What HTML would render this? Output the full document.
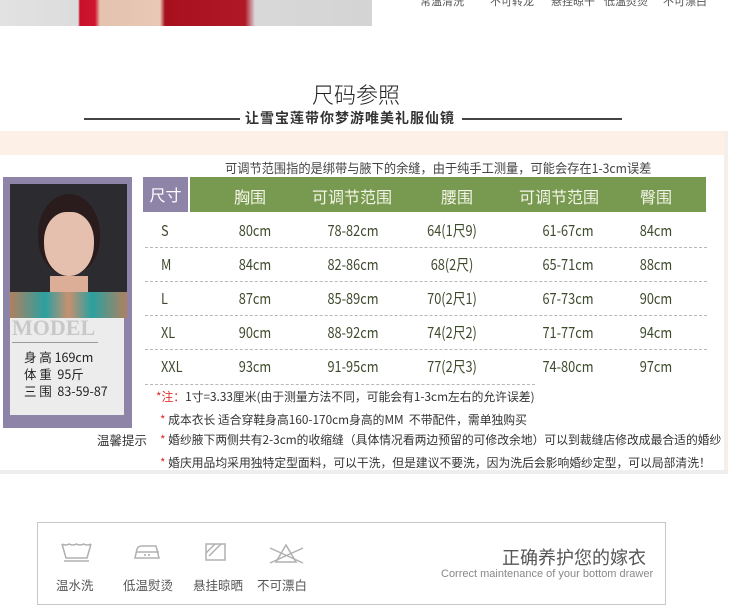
<!DOCTYPE html>
<html><head><meta charset="utf-8"><style>
*{margin:0;padding:0;box-sizing:border-box}
body{width:750px;height:608px;background:#fff;position:relative;overflow:hidden;font-family:"Liberation Sans","Noto Sans CJK SC",sans-serif;color:#333}
.a{position:absolute;white-space:nowrap}
.row{position:absolute;font-size:15px;line-height:20px;color:#3e4a2c;font-family:"Noto Sans CJK SC",sans-serif;transform:scaleX(.85);transform-origin:center}
.dash{position:absolute;height:0;border-top:1px dashed #b8b8b8}
.note{position:absolute;font-size:11.8px;color:#333;white-space:nowrap;font-family:"Noto Sans CJK SC",sans-serif}
.note b{color:#e03030;font-weight:normal}
</style></head><body>
<div class="a" style="left:0;top:0;width:372px;height:26px;background:linear-gradient(90deg,#e2e2e2 0,#dcdcdc 78px,#c8102a 80px,#d0142e 95px,#e6c2b0 100px,#e8c8b6 160px,#a8101e 165px,#b01828 245px,#d8d8d8 255px,#d4d4d4 372px)"></div>
<div class="a" style="left:420px;top:-7px;font-size:11px;color:#555">常温清洗</div>
<div class="a" style="left:490px;top:-7px;font-size:11px;color:#555">不可转龙</div>
<div class="a" style="left:551px;top:-7px;font-size:11px;color:#555">悬挂晾干</div>
<div class="a" style="left:604px;top:-7px;font-size:11px;color:#555">低温熨烫</div>
<div class="a" style="left:663px;top:-7px;font-size:11px;color:#555">不可漂白</div>

<div class="a" style="left:312px;top:78px;font-size:22px;color:#222;font-family:'Noto Sans CJK SC',sans-serif;font-weight:300">尺码参照</div>
<div class="a" style="left:84px;top:118px;width:156px;border-top:2px solid #444"></div>
<div class="a" style="left:462px;top:118px;width:160px;border-top:2px solid #444"></div>
<div class="a" style="left:245px;top:108px;font-size:14px;letter-spacing:1px;color:#333;font-weight:bold;font-family:'Noto Sans CJK SC',sans-serif">让雪宝莲带你梦游唯美礼服仙镜</div>

<div class="a" style="left:0;top:131px;width:724px;height:24px;background:#fdf0e6"></div>
<div class="a" style="left:724px;top:131px;width:4px;height:340px;background:#f6efe9"></div>
<div class="a" style="left:0;top:470px;width:728px;height:4px;background:#eeeeee"></div>

<div class="a" style="left:225px;top:158px;font-size:13px;color:#444;font-family:'Noto Sans CJK SC',sans-serif;transform:scaleX(.94);transform-origin:left">可调节范围指的是绑带与腋下的余缝，由于纯手工测量，可能会存在1-3cm误差</div>

<div class="a" style="left:3px;top:177px;width:129px;height:251px;background:#8e84a8"></div>
<div class="a" style="left:10px;top:184px;width:117px;height:134px;background:#2c2c30;overflow:hidden">
  <div class="a" style="left:28px;top:10px;width:62px;height:80px;border-radius:50% 50% 45% 45%;background:#2a1c1c"></div>
  <div class="a" style="left:34px;top:28px;width:50px;height:64px;border-radius:45% 45% 50% 50%;background:#e6c0ae"></div>
  <div class="a" style="left:40px;top:92px;width:38px;height:20px;background:#dcae98"></div>
  <div class="a" style="left:0;top:108px;width:117px;height:26px;background:linear-gradient(90deg,#b08060,#2aa0a0 30%,#c89070 50%,#2aa0a0 70%,#b08060)"></div>
</div>
<div class="a" style="left:10px;top:318px;width:114px;height:97px;background:#ececec"></div>
<div class="a" style="left:12px;top:315px;font-size:22px;color:#c8c8c8;font-family:'Liberation Serif',serif;font-weight:bold">MODEL</div>
<div class="a" style="left:12px;top:342px;width:86px;border-top:1px solid #999"></div>
<div class="a" style="left:24px;top:348px;font-size:12.5px;color:#222;line-height:17px;font-family:'Noto Sans CJK SC',sans-serif">身 高 169cm<br>体 重&nbsp; 95斤<br>三 围&nbsp; 83-59-87</div>

<div class="a" style="left:143px;top:177px;width:45px;height:35px;background:#8e84a8;color:#fff;font-size:16px;line-height:35px;text-align:center;font-family:'Noto Sans CJK SC',sans-serif">尺寸</div>
<div class="a" style="left:190px;top:177px;width:516px;height:35px;background:#789a50"></div>
<div class="a" style="left:234px;top:184px;font-size:16px;color:#f4f4e8;font-family:'Noto Sans CJK SC',sans-serif">胸围</div>
<div class="a" style="left:312px;top:184px;font-size:16px;color:#f4f4e8;font-family:'Noto Sans CJK SC',sans-serif">可调节范围</div>
<div class="a" style="left:441px;top:184px;font-size:16px;color:#f4f4e8;font-family:'Noto Sans CJK SC',sans-serif">腰围</div>
<div class="a" style="left:519px;top:184px;font-size:16px;color:#f4f4e8;font-family:'Noto Sans CJK SC',sans-serif">可调节范围</div>
<div class="a" style="left:640px;top:184px;font-size:16px;color:#f4f4e8;font-family:'Noto Sans CJK SC',sans-serif">臀围</div>

<div class="row" style="left:161px;top:221px;transform-origin:left">S</div>
<div class="row" style="left:161px;top:255px;transform-origin:left">M</div>
<div class="row" style="left:161px;top:289px;transform-origin:left">L</div>
<div class="row" style="left:161px;top:323px;transform-origin:left">XL</div>
<div class="row" style="left:161px;top:357px;transform-origin:left">XXL</div>
<div class="row" style="left:215px;top:221px;width:80px;text-align:center">80cm</div>
<div class="row" style="left:215px;top:255px;width:80px;text-align:center">84cm</div>
<div class="row" style="left:215px;top:289px;width:80px;text-align:center">87cm</div>
<div class="row" style="left:215px;top:323px;width:80px;text-align:center">90cm</div>
<div class="row" style="left:215px;top:357px;width:80px;text-align:center">93cm</div>
<div class="row" style="left:303px;top:221px;width:100px;text-align:center">78-82cm</div>
<div class="row" style="left:303px;top:255px;width:100px;text-align:center">82-86cm</div>
<div class="row" style="left:303px;top:289px;width:100px;text-align:center">85-89cm</div>
<div class="row" style="left:303px;top:323px;width:100px;text-align:center">88-92cm</div>
<div class="row" style="left:303px;top:357px;width:100px;text-align:center">91-95cm</div>
<div class="row" style="left:412px;top:221px;width:80px;text-align:center">64(1尺9)</div>
<div class="row" style="left:412px;top:255px;width:80px;text-align:center">68(2尺)</div>
<div class="row" style="left:412px;top:289px;width:80px;text-align:center">70(2尺1)</div>
<div class="row" style="left:412px;top:323px;width:80px;text-align:center">74(2尺2)</div>
<div class="row" style="left:412px;top:357px;width:80px;text-align:center">77(2尺3)</div>
<div class="row" style="left:518px;top:221px;width:100px;text-align:center">61-67cm</div>
<div class="row" style="left:518px;top:255px;width:100px;text-align:center">65-71cm</div>
<div class="row" style="left:518px;top:289px;width:100px;text-align:center">67-73cm</div>
<div class="row" style="left:518px;top:323px;width:100px;text-align:center">71-77cm</div>
<div class="row" style="left:518px;top:357px;width:100px;text-align:center">74-80cm</div>
<div class="row" style="left:626px;top:221px;width:60px;text-align:center">84cm</div>
<div class="row" style="left:626px;top:255px;width:60px;text-align:center">88cm</div>
<div class="row" style="left:626px;top:289px;width:60px;text-align:center">90cm</div>
<div class="row" style="left:626px;top:323px;width:60px;text-align:center">94cm</div>
<div class="row" style="left:626px;top:357px;width:60px;text-align:center">97cm</div>
<div class="dash" style="left:145px;top:247px;width:562px"></div>
<div class="dash" style="left:145px;top:281px;width:562px"></div>
<div class="dash" style="left:145px;top:315px;width:562px"></div>
<div class="dash" style="left:145px;top:349px;width:562px"></div>
<div class="dash" style="left:145px;top:384px;width:390px"></div>

<div class="note" style="left:156px;top:388px"><b>*注：</b>1寸=3.33厘米(由于测量方法不同，可能会有1-3cm左右的允许误差)</div>
<div class="note" style="left:160px;top:411px"><b>*</b> 成本衣长 适合穿鞋身高160-170cm身高的MM&nbsp; 不带配件，需单独购买</div>
<div class="a" style="left:97px;top:430px;font-size:12.5px;color:#333;font-family:'Noto Sans CJK SC',sans-serif">温馨提示</div>
<div class="note" style="left:160px;top:431px"><b>*</b> 婚纱腋下两侧共有2-3cm的收缩缝（具体情况看两边预留的可修改余地）可以到裁缝店修改成最合适的婚纱</div>
<div class="note" style="left:160px;top:454px"><b>*</b> 婚庆用品均采用独特定型面料，可以干洗，但是建议不要洗，因为洗后会影响婚纱定型，可以局部清洗！</div>

<div class="a" style="left:37px;top:522px;width:629px;height:83px;border:1px solid #c8c8c8"></div>
<svg class="a" style="left:0;top:0" width="750" height="608">
<g fill="none" stroke="#b0b0b0" stroke-width="1.5">
<path d="M62 544 L66 558 L87 558 L91 544"/><path d="M62 544 q3.6 2 7.2 0 q3.6 2 7.2 0 q3.6 2 7.2 0 q3.6 2 7.2 0"/><path d="M64 561 H89"/>
<path d="M135 558 L137 549 Q138 546 142 546 L156 546 L159 558 Z"/><path d="M136 552 H159"/>
<rect x="206" y="544" width="19" height="16"/><path d="M206 553 L215 544 M209 556 L221 544"/>
<path d="M286 545 L276 562 H296 Z"/><path d="M270 548 L303 563 M270 563 L303 548"/>
</g>
<g fill="#aaa"><circle cx="145" cy="555" r="1"/><circle cx="149" cy="555" r="1"/></g>
</svg>
<div class="a" style="left:56px;top:575px;font-size:12.5px;color:#555">温水洗</div>
<div class="a" style="left:123px;top:575px;font-size:12.5px;color:#555">低温熨烫</div>
<div class="a" style="left:193px;top:575px;font-size:12.5px;color:#555">悬挂晾晒</div>
<div class="a" style="left:257px;top:575px;font-size:12.5px;color:#555">不可漂白</div>
<div class="a" style="left:502px;top:544px;font-size:18px;color:#555;font-family:'Noto Sans CJK SC',sans-serif">正确养护您的嫁衣</div>
<div class="a" style="left:441px;top:568px;font-size:11px;color:#888">Correct maintenance of your bottom drawer</div>
</body></html>
